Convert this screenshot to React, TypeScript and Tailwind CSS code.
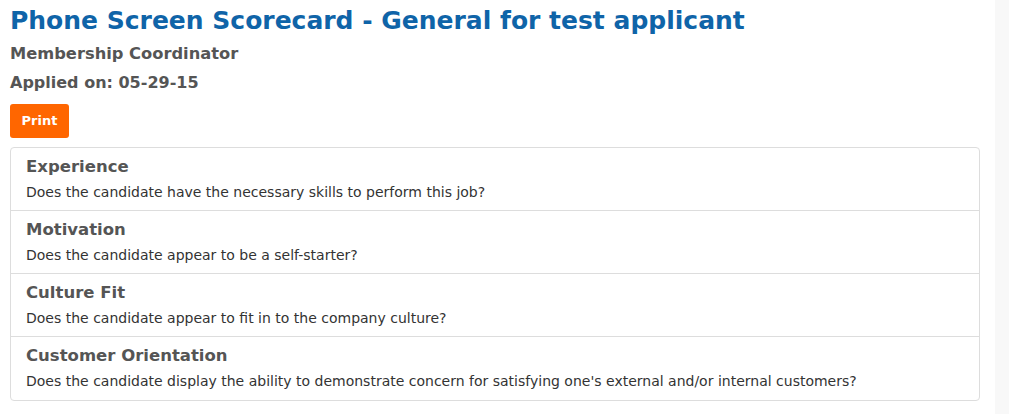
const items = [
  {
    title: "Experience",
    text: "Does the candidate have the necessary skills to perform this job?",
  },
  {
    title: "Motivation",
    text: "Does the candidate appear to be a self-starter?",
  },
  {
    title: "Culture Fit",
    text: "Does the candidate appear to fit in to the company culture?",
  },
  {
    title: "Customer Orientation",
    text: "Does the candidate display the ability to demonstrate concern for satisfying one's external and/or internal customers?",
  },
];

export default function App() {
  return (
    <div className="flex h-[414px] w-[1009px] bg-white font-['DejaVu_Sans',sans-serif] text-[#555]">
      <main className="w-[995px] pl-[10px] pr-[15px]">
        <h1 className="mt-[3px] text-[25px] font-bold leading-[36px] text-[#0f64a8]">
          Phone Screen Scorecard - General for test applicant
        </h1>
        <h2 className="mt-[4px] text-[16.3px] font-bold leading-[22px]">Membership Coordinator</h2>
        <h3 className="mt-[7px] text-[16px] font-bold leading-[22px]">Applied on: 05-29-15</h3>
        <button className="mt-[10px] h-[34px] w-[59px] rounded-[3px] bg-[#ff6600] text-[13px] font-bold text-white">
          Print
        </button>
        <ul className="mt-[9px] divide-y divide-[#ddd] rounded-[4px] border border-[#ddd]">
          {items.map((item) => (
            <li key={item.title} className="h-[63px] px-[15px] pt-[7px]">
              <div className="text-[16.5px] font-bold leading-[24px]">{item.title}</div>
              <div className="mt-[3px] text-[14px] leading-[20px] text-[#333]">{item.text}</div>
            </li>
          ))}
        </ul>
      </main>
      <aside className="flex-1 bg-[#f8f8f8]" />
    </div>
  );
}
